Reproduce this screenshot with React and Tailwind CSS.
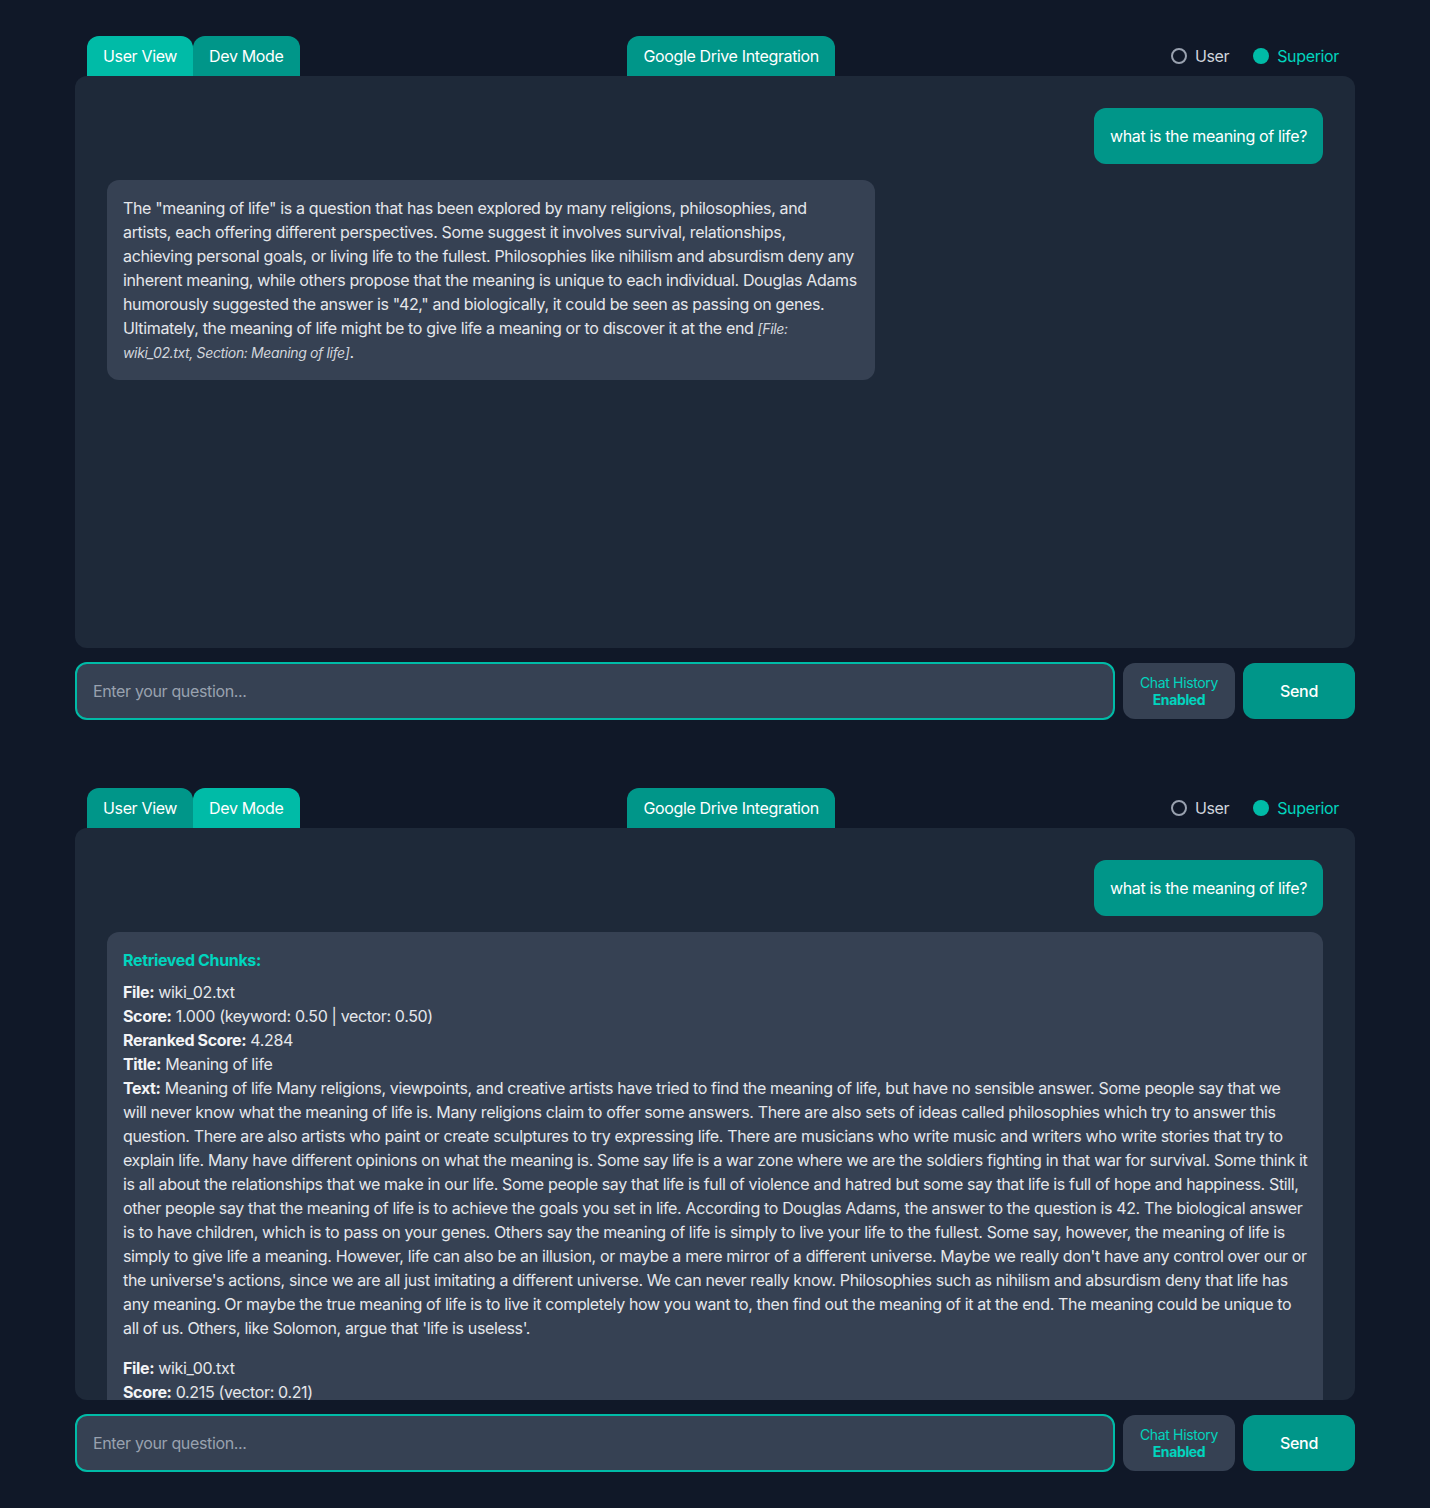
import { useState } from "react";

const answerLines = [
  'The "meaning of life" is a question that has been explored by many religions, philosophies, and',
  "artists, each offering different perspectives. Some suggest it involves survival, relationships,",
  "achieving personal goals, or living life to the fullest. Philosophies like nihilism and absurdism deny any",
  "inherent meaning, while others propose that the meaning is unique to each individual. Douglas Adams",
  'humorously suggested the answer is "42," and biologically, it could be seen as passing on genes.',
];

// chunk text, broken where the chat window wraps it
const chunkLines = [
  "Meaning of life Many religions, viewpoints, and creative artists have tried to find the meaning of life, but have no sensible answer. Some people say that we",
  "will never know what the meaning of life is. Many religions claim to offer some answers. There are also sets of ideas called philosophies which try to answer this",
  "question. There are also artists who paint or create sculptures to try expressing life. There are musicians who write music and writers who write stories that try to",
  "explain life. Many have different opinions on what the meaning is. Some say life is a war zone where we are the soldiers fighting in that war for survival. Some think it",
  "is all about the relationships that we make in our life. Some people say that life is full of violence and hatred but some say that life is full of hope and happiness. Still,",
  "other people say that the meaning of life is to achieve the goals you set in life. According to Douglas Adams, the answer to the question is 42. The biological answer",
  "is to have children, which is to pass on your genes. Others say the meaning of life is simply to live your life to the fullest. Some say, however, the meaning of life is",
  "simply to give life a meaning. However, life can also be an illusion, or maybe a mere mirror of a different universe. Maybe we really don't have any control over our or",
  "the universe's actions, since we are all just imitating a different universe. We can never really know. Philosophies such as nihilism and absurdism deny that life has",
  "any meaning. Or maybe the true meaning of life is to live it completely how you want to, then find out the meaning of it at the end. The meaning could be unique to",
  "all of us. Others, like Solomon, argue that 'life is useless'.",
];

const chunks = [
  {
    file: "wiki_02.txt",
    score: "1.000 (keyword: 0.50 | vector: 0.50)",
    reranked: "4.284",
    title: "Meaning of life",
    lines: chunkLines,
  },
  {
    file: "wiki_00.txt",
    score: "0.215 (vector: 0.21)",
    reranked: "-2.913",
    title: "Life",
    lines: ["Life is the state of being alive."],
  },
];

const Lines = ({ lines }) =>
  lines.map((l, i) => (
    <span key={i}>
      {i > 0 && <br />}
      {l}
    </span>
  ));

const Field = ({ label, children }) => (
  <div className="whitespace-nowrap">
    <b className="font-bold text-gray-100">{label}:</b> {children}
  </div>
);

const ChatBox = ({ dev }) => {
  const [role, setRole] = useState("superior");

  return (
    <section className="w-[1280px] mx-auto">
      {/* Header with tabs */}
      <div className="flex justify-between items-center px-3 h-10">
        <div className="flex">
          <button
            className={`px-4 h-10 rounded-t-xl text-white ${dev ? "bg-teal-600" : "bg-teal-500"}`}
          >
            User View
          </button>
          <button
            className={`px-4 h-10 rounded-t-xl text-white ${dev ? "bg-teal-500" : "bg-teal-600"}`}
          >
            Dev Mode
          </button>
        </div>
        <button className="px-4 h-10 rounded-t-xl bg-teal-600 text-white mr-2">
          Google Drive Integration
        </button>
        <div className="flex items-center gap-6 pr-1">
          <label className="flex items-center gap-2 cursor-pointer" onClick={() => setRole("user")}>
            <span
              className={`w-4 h-4 rounded-full ${
                role === "user" ? "bg-teal-500" : "border-2 border-gray-400"
              }`}
            />
            <span className={role === "user" ? "text-teal-400" : "text-gray-300"}>User</span>
          </label>
          <label className="flex items-center gap-2 cursor-pointer" onClick={() => setRole("superior")}>
            <span
              className={`w-4 h-4 rounded-full ${
                role === "superior" ? "bg-teal-500" : "border-2 border-gray-400"
              }`}
            />
            <span className={role === "superior" ? "text-teal-400" : "text-gray-300"}>Superior</span>
          </label>
        </div>
      </div>

      {/* Messages */}
      <div className="h-[572px] bg-gray-800 rounded-xl overflow-hidden p-8 flex flex-col gap-4">
        <div className="self-end bg-teal-600 text-white rounded-xl px-4 py-4">
          what is the meaning of life?
        </div>
        {dev ? (
          <div className="bg-gray-700 rounded-xl px-4 pt-4 pb-4 text-gray-200 shrink-0">
            <div className="font-bold text-teal-400 mb-2">Retrieved Chunks:</div>
            <div className="flex flex-col gap-4">
              {chunks.map((c) => (
                <div key={c.file}>
                  <Field label="File">{c.file}</Field>
                  <Field label="Score">{c.score}</Field>
                  <Field label="Reranked Score">{c.reranked}</Field>
                  <Field label="Title">{c.title}</Field>
                  <Field label="Text">
                    <Lines lines={c.lines} />
                  </Field>
                </div>
              ))}
            </div>
          </div>
        ) : (
          <div className="self-start w-3xl bg-gray-700 rounded-xl px-4 py-4 text-gray-200 whitespace-nowrap">
            <Lines lines={answerLines} />
            <br />
            Ultimately, the meaning of life might be to give life a meaning or to discover it at the end{" "}
            <em className="text-sm text-gray-300">[File:</em>
            <br />
            <em className="text-sm text-gray-300">wiki_02.txt, Section: Meaning of life]</em>.
          </div>
        )}
      </div>

      {/* Input row */}
      <div className="flex items-center gap-2 mt-[14px]">
        <input
          autoFocus={dev}
          placeholder="Enter your question..."
          className="flex-1 h-[58px] bg-gray-700 border-2 border-teal-500 rounded-xl px-4 text-gray-100 placeholder:text-gray-400 outline-none"
        />
        <button className="w-28 h-14 rounded-xl bg-gray-700 text-teal-400 text-sm leading-[17px]">
          Chat History
          <br />
          <b className="font-bold">Enabled</b>
        </button>
        <button className="w-28 h-14 rounded-xl bg-teal-600 text-white font-medium">Send</button>
      </div>
    </section>
  );
};

export default function App() {
  return (
    <div className="min-h-screen bg-gray-900 font-['Inter',sans-serif] tracking-[-0.022em] pt-9 pb-[34px] flex flex-col gap-[68px]">
      <ChatBox />
      <ChatBox dev />
    </div>
  );
}
